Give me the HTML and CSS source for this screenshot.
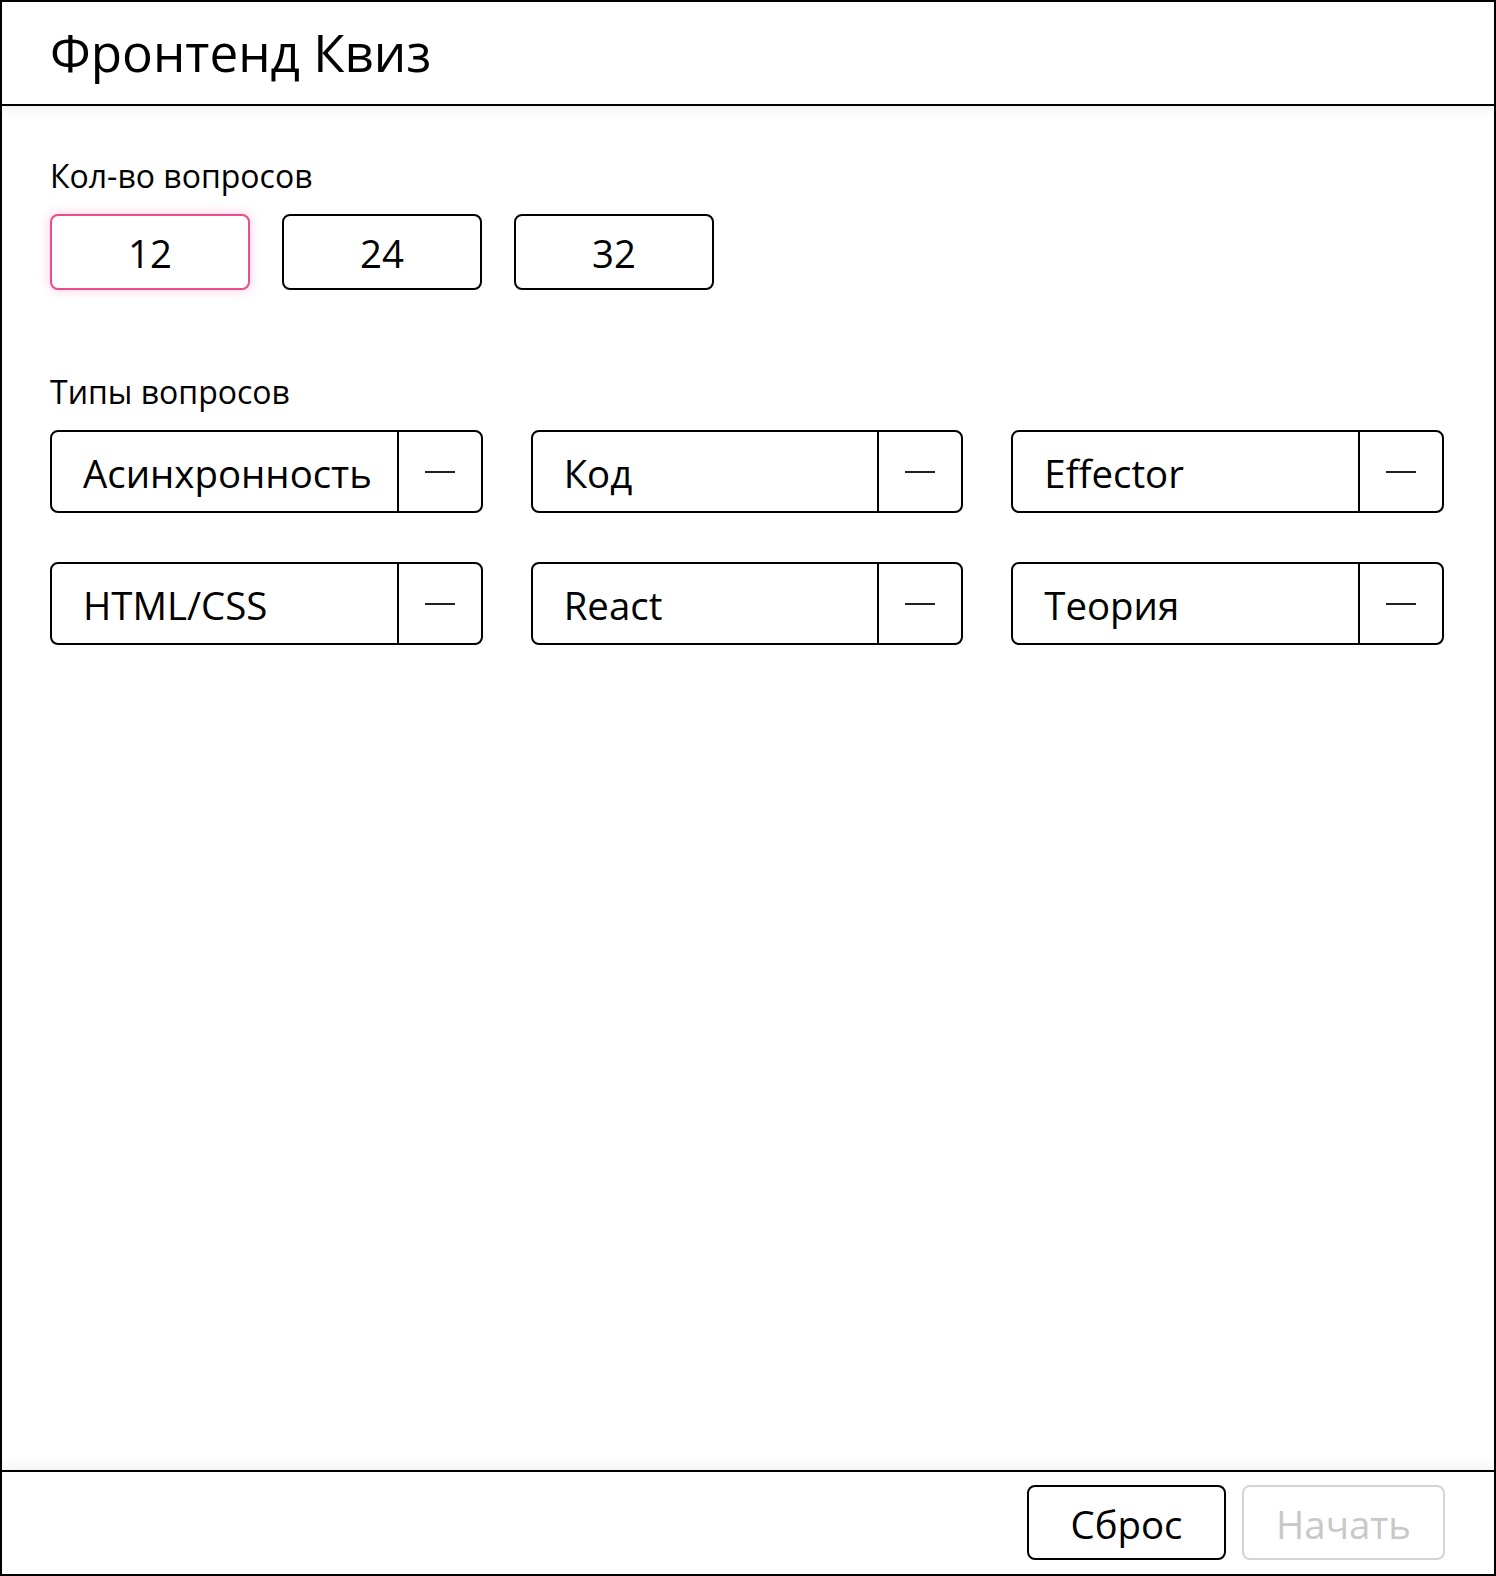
FILE: index.html
```html
<!DOCTYPE html>
<html lang="ru">
<head>
<meta charset="utf-8">
<title>Фронтенд Квиз</title>
<link rel="stylesheet" href="styles.css">
</head>
<body>
<div class="app">
  <header class="header">
    <h1 class="title">Фронтенд Квиз</h1>
  </header>
  <main class="content">
    <section class="section">
      <h2 class="label">Кол-во вопросов</h2>
      <div class="counts">
        <button class="count count--active">12</button>
        <button class="count">24</button>
        <button class="count">32</button>
      </div>
    </section>
    <section class="section section--types">
      <h2 class="label">Типы вопросов</h2>
      <div class="types">
        <div class="type"><span class="type-name">Асинхронность</span><button class="type-toggle"><span class="minus"></span></button></div>
        <div class="type"><span class="type-name">Код</span><button class="type-toggle"><span class="minus"></span></button></div>
        <div class="type"><span class="type-name">Effector</span><button class="type-toggle"><span class="minus"></span></button></div>
        <div class="type"><span class="type-name">HTML/CSS</span><button class="type-toggle"><span class="minus"></span></button></div>
        <div class="type"><span class="type-name">React</span><button class="type-toggle"><span class="minus"></span></button></div>
        <div class="type"><span class="type-name">Теория</span><button class="type-toggle"><span class="minus"></span></button></div>
      </div>
    </section>
  </main>
  <footer class="footer">
    <button class="action">Сброс</button>
    <button class="action action--disabled" disabled>Начать</button>
  </footer>
</div>
</body>
</html>
```
FILE: styles.css
```css
* { box-sizing: border-box; }
html, body { margin: 0; padding: 0; background: #fff; }
body {
  font-family: "Open Sans", "Noto Sans", sans-serif;
  color: #000;
}
.app {
  width: 1496px;
  height: 1576px;
  border: 2px solid #000;
  display: flex;
  flex-direction: column;
}
.header {
  height: 104px;
  border-bottom: 2px solid #000;
  padding: 0 48px;
  display: flex;
  align-items: center;
  position: relative;
  z-index: 1;
  background: #fff;
  box-shadow: 0 2px 14px rgba(0, 0, 0, 0.08);
}
.title {
  margin: 0;
  font-size: 51.2px;
  font-weight: 400;
  line-height: 1;
  padding-bottom: 1px;
}
.content {
  flex: 1;
  padding: 46px 50px 46px 48px;
}
.label {
  margin: 0 0 14px;
  font-size: 32px;
  font-weight: 400;
  line-height: 48px;
}
.section--types { margin-top: 78px; }
.counts {
  display: flex;
  gap: 32px;
}
.count {
  width: 200px;
  height: 76px;
  border: 2px solid #000;
  border-radius: 8px;
  background: #fff;
  font-family: inherit;
  font-size: 38.4px;
  color: #000;
  padding: 2px 0 0;
}
.count--active {
  border-color: #ea4c8d;
  box-shadow: 0 0 12px rgba(234, 76, 141, 0.3);
}
.types {
  display: grid;
  grid-template-columns: repeat(3, 1fr);
  column-gap: 48px;
  row-gap: 49px;
}
.type {
  height: 83px;
  border: 2px solid #000;
  border-radius: 8px;
  display: flex;
  align-items: stretch;
}
.type-name {
  flex: 1;
  display: flex;
  align-items: center;
  padding: 2px 0 0 31px;
  font-size: 38.4px;
}
.type-toggle {
  width: 84px;
  border: 0;
  border-left: 2px solid #000;
  background: transparent;
  padding: 0;
  display: flex;
  align-items: center;
  justify-content: center;
}
.minus {
  display: block;
  width: 30px;
  height: 2px;
  background: #222;
}
.footer {
  height: 104px;
  border-top: 2px solid #000;
  padding: 0 49px 2px 48px;
  display: flex;
  justify-content: flex-end;
  align-items: center;
  gap: 16px;
  position: relative;
  background: #fff;
  box-shadow: 0 -2px 16px rgba(0, 0, 0, 0.08);
}
.action {
  min-width: 199px;
  height: 75px;
  padding: 4px 32px 0;
  border: 2px solid #000;
  border-radius: 8px;
  background: #fff;
  font-family: inherit;
  font-size: 38.4px;
  color: #000;
}
.action--disabled {
  border-color: #d4d4d4;
  color: #c8c8c8;
}
```
